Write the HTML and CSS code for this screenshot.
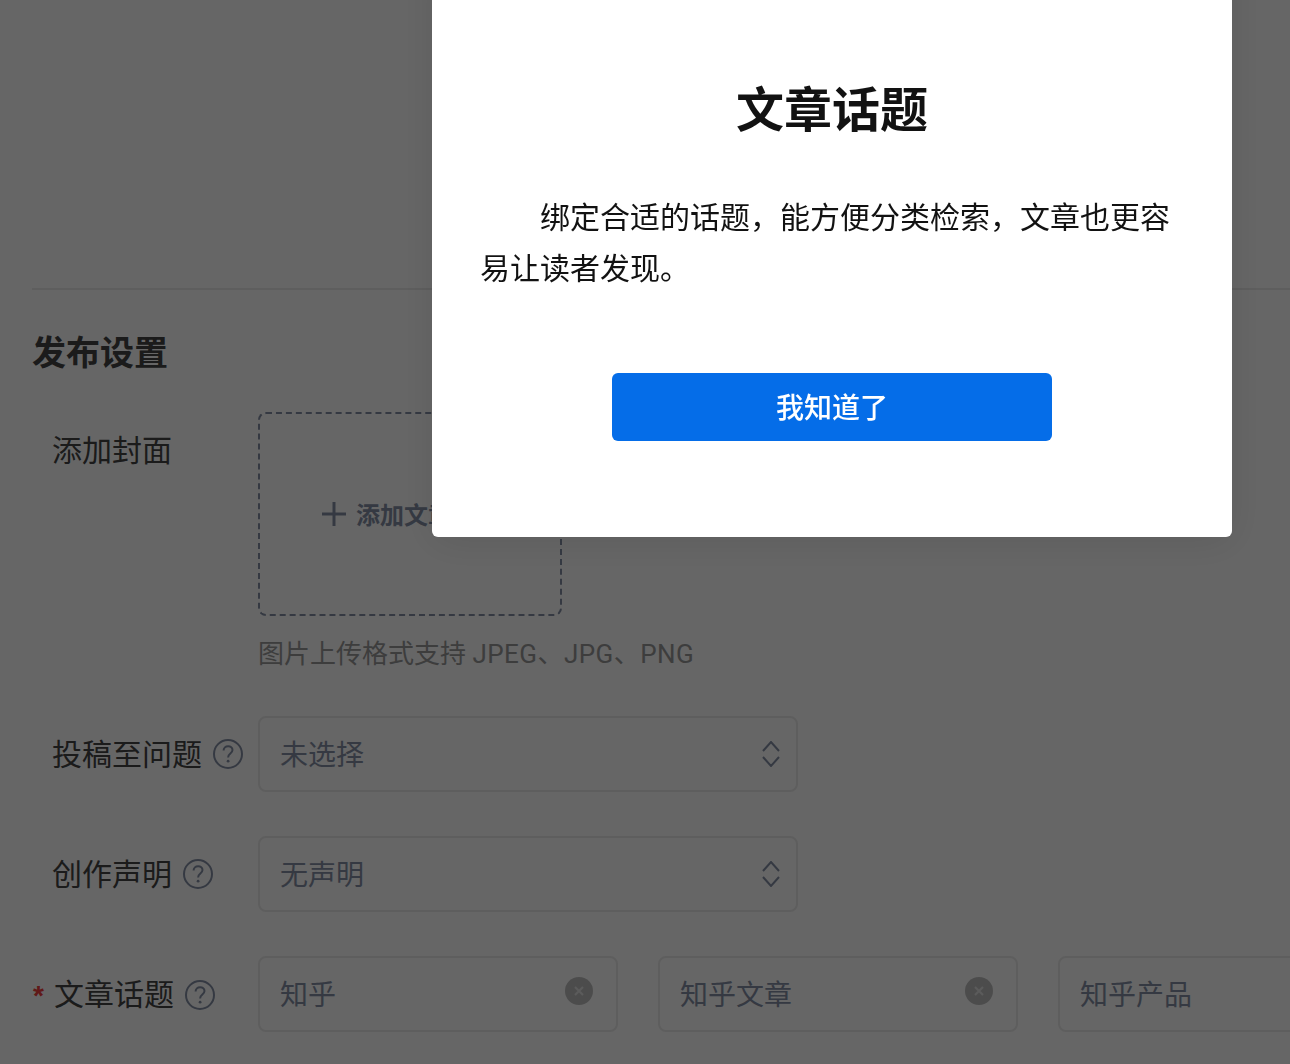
FILE: index.html
```html
<!DOCTYPE html>
<html lang="zh-CN">
<head>
<meta charset="utf-8">
<title>发布设置</title>
<link rel="stylesheet" href="styles.css">
</head>
<body>
<main class="page">
  <div class="divider"></div>
  <h2 class="section-title">发布设置</h2>

  <div class="row row-cover">
    <div class="label"><span class="label-text">添加封面</span></div>
    <div class="field">
      <div class="cover">
        <svg class="plus" viewBox="0 0 24 24" width="24" height="24"><path d="M12 0v24M0 12h24" fill="none" stroke="currentColor" stroke-width="3"/></svg>
        <span class="cover-text">添加文章封面</span>
      </div>
      <p class="hint">图片上传格式支持 <span class="hint-latin">JPEG、JPG、PNG</span></p>
    </div>
  </div>

  <div class="row row-select">
    <div class="label"><span class="label-text">投稿至问题</span>
      <svg class="help" viewBox="0 0 30 30" width="30" height="30"><circle cx="15" cy="15" r="14" fill="none" stroke="currentColor" stroke-width="2"/><path d="M10.6 11.6c0-2.700 2-4.400 4.500-4.400s4.400 1.600 4.400 3.900c0 3.400-4.400 3.600-4.400 7.300" fill="none" stroke="currentColor" stroke-width="2"/><circle cx="15.100" cy="22.200" r="1.400" fill="currentColor"/></svg>
    </div>
    <div class="select"><span class="value">未选择</span>
      <svg class="updown" viewBox="0 0 18 26" width="18" height="26"><path d="M1 10l8-9 8 9M1 16l8 9 8-9" fill="none" stroke="currentColor" stroke-width="2"/></svg>
    </div>
  </div>

  <div class="row row-select">
    <div class="label"><span class="label-text">创作声明</span>
      <svg class="help" viewBox="0 0 30 30" width="30" height="30"><circle cx="15" cy="15" r="14" fill="none" stroke="currentColor" stroke-width="2"/><path d="M10.6 11.6c0-2.700 2-4.400 4.500-4.400s4.400 1.600 4.400 3.900c0 3.400-4.400 3.600-4.400 7.300" fill="none" stroke="currentColor" stroke-width="2"/><circle cx="15.100" cy="22.200" r="1.400" fill="currentColor"/></svg>
    </div>
    <div class="select"><span class="value">无声明</span>
      <svg class="updown" viewBox="0 0 18 26" width="18" height="26"><path d="M1 10l8-9 8 9M1 16l8 9 8-9" fill="none" stroke="currentColor" stroke-width="2"/></svg>
    </div>
  </div>

  <div class="row row-topics">
    <div class="label label-required"><span class="star">*</span><span class="label-text">文章话题</span>
      <svg class="help help-low" viewBox="0 0 30 30" width="30" height="30"><circle cx="15" cy="15" r="14" fill="none" stroke="currentColor" stroke-width="2"/><path d="M10.6 11.6c0-2.700 2-4.400 4.500-4.400s4.400 1.600 4.400 3.900c0 3.400-4.400 3.600-4.400 7.300" fill="none" stroke="currentColor" stroke-width="2"/><circle cx="15.100" cy="22.200" r="1.400" fill="currentColor"/></svg>
    </div>
    <div class="topics">
      <div class="topic"><span class="value">知乎</span>
        <svg class="clear" viewBox="0 0 28 28" width="28" height="28"><circle cx="14" cy="14" r="14" fill="currentColor"/><path d="M10 10l8 8M18 10l-8 8" stroke="#e4e4e4" stroke-width="2" fill="none"/></svg>
      </div>
      <div class="topic"><span class="value">知乎文章</span>
        <svg class="clear" viewBox="0 0 28 28" width="28" height="28"><circle cx="14" cy="14" r="14" fill="currentColor"/><path d="M10 10l8 8M18 10l-8 8" stroke="#e4e4e4" stroke-width="2" fill="none"/></svg>
      </div>
      <div class="topic"><span class="value">知乎产品</span></div>
    </div>
  </div>
</main>

<div class="overlay">
  <section class="modal">
    <h1 class="modal-title">文章话题</h1>
    <p class="modal-text">绑定合适的话题，能方便分类检索，文章也更容易让读者发现。</p>
    <button class="modal-button" type="button">我知道了</button>
  </section>
</div>
</body>
</html>
```

FILE: styles.css
```css
* { box-sizing: border-box; }

html, body {
  margin: 0;
  height: 100%;
  overflow: hidden;
  background: #fff;
}

body {
  font-family: "Noto Sans CJK SC", "Liberation Sans", sans-serif;
  color: #444;
}

.page {
  padding: 288px 0 0 32px;
  height: 1064px;
  overflow: hidden;
}

.divider {
  height: 2px;
  background: #ebebeb;
}

.section-title {
  margin: 37px 0 0;
  font-size: 34px;
  line-height: 48px;
  font-weight: 700;
  color: #444;
}

.row {
  display: flex;
}

.row-cover {
  margin-top: 37px;
}

.row-select {
  margin-top: 44px;
  align-items: center;
}

.row-cover + .row-select {
  margin-top: 43px;
}

.row-topics {
  margin-top: 44px;
  align-items: center;
}

.label {
  flex: none;
  width: 226px;
  padding-left: 20px;
  display: flex;
  align-items: center;
  gap: 11px;
  font-size: 30px;
  line-height: 40px;
  color: #444;
}

.label-text {
  margin-top: -4px;
}

.row-cover .label {
  padding-top: 20px;
  align-self: flex-start;
}

.label-required {
  padding-left: 0;
  gap: 0;
}

.star {
  flex: none;
  width: 22px;
  margin-top: 4px;
  padding-left: 1px;
  font-family: "Liberation Sans", sans-serif;
  font-size: 28px;
  font-weight: 700;
  line-height: 30px;
  color: #f1403c;
}

.help {
  flex: none;
  color: #8590a6;
}

.help-low {
  margin: 2px 0 0 11px;
}

.field {
  flex: none;
}

.cover {
  width: 304px;
  height: 204px;
  padding-left: 2px;
  border: 2px dashed #8590a6;
  border-radius: 8px;
  display: flex;
  align-items: center;
  justify-content: center;
  gap: 10px;
  font-size: 24px;
  font-weight: 700;
  color: #8590a6;
}

.cover-text {
  margin-top: -2px;
}

.hint {
  margin: 19px 0 0;
  font-family: Roboto, "Noto Sans CJK SC", sans-serif;
  font-size: 26px;
  line-height: 38px;
  color: #999;
}

.hint-latin {
  letter-spacing: 0.45px;
}

.select,
.topic {
  flex: none;
  height: 76px;
  padding: 0 16px 0 20px;
  border: 2px solid #ebebeb;
  border-radius: 8px;
  display: flex;
  align-items: center;
  justify-content: space-between;
  font-size: 28px;
  color: #8590a6;
}

.value {
  margin-top: -2px;
}

.select {
  width: 540px;
}

.updown {
  flex: none;
  color: #8590a6;
}

.topics {
  flex: none;
  display: flex;
  gap: 40px;
}

.topic {
  width: 360px;
}

.clear {
  flex: none;
  margin: -6px 7px 0 0;
  color: #bfbfbf;
}

.overlay {
  position: fixed;
  inset: 0;
  padding-left: 432px;
  background: rgba(0, 0, 0, 0.6);
}

.modal {
  width: 800px;
  margin-top: -40px;
  padding: 110px 48px 96px;
  background: #fff;
  border-radius: 6px;
  box-shadow: 0 5px 40px rgba(0, 0, 0, 0.1);
  display: flex;
  flex-direction: column;
  align-items: center;
  color: #121212;
}

.modal-title {
  margin: 0;
  font-size: 48px;
  line-height: 72px;
  font-weight: 700;
}

.modal-text {
  align-self: stretch;
  margin: 48px 0 0;
  font-size: 30px;
  line-height: 51px;
  text-indent: 60px;
}

.modal-button {
  width: 440px;
  height: 68px;
  margin-top: 81px;
  padding: 0 0 3px;
  border: 0;
  border-radius: 6px;
  background: #056de8;
  color: #fff;
  font-family: inherit;
  font-size: 28px;
  font-weight: 500;
}
```
